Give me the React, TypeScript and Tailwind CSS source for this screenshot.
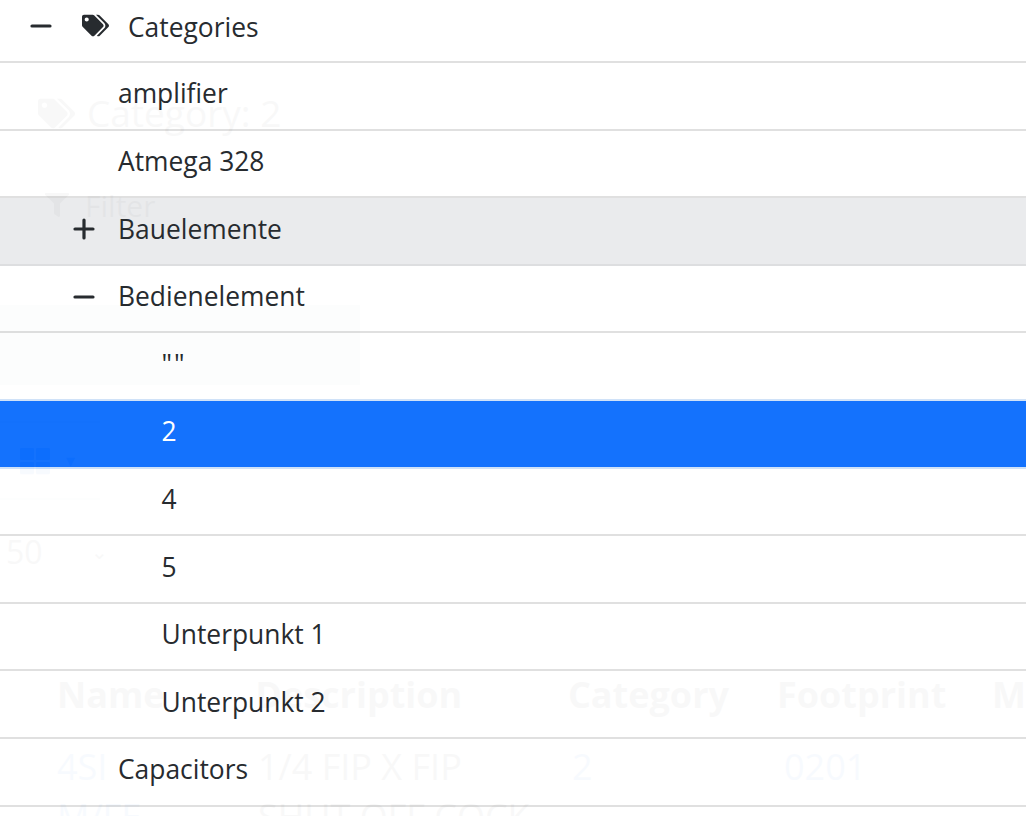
import { FaTags, FaFilter, FaThLarge } from "react-icons/fa";

function Minus() {
  return (
    <svg width="22" height="22" viewBox="0 0 22 22" fill="none" stroke="#212529" strokeWidth="3.2" strokeLinecap="round">
      <path d="M2 11H20" />
    </svg>
  );
}

function Plus() {
  return (
    <svg width="22" height="22" viewBox="0 0 22 22" fill="none" stroke="#212529" strokeWidth="3.2" strokeLinecap="round">
      <path d="M2 11H20M11 2V20" />
    </svg>
  );
}

type Row = {
  label: string;
  level: 1 | 2;
  mark?: "minus" | "plus";
  tone?: "hover" | "active";
};

const rows: Row[] = [
  { label: "amplifier", level: 1 },
  { label: "Atmega 328", level: 1 },
  { label: "Bauelemente", level: 1, mark: "plus", tone: "hover" },
  { label: "Bedienelement", level: 1, mark: "minus" },
  { label: '""', level: 2 },
  { label: "2", level: 2, tone: "active" },
  { label: "4", level: 2 },
  { label: "5", level: 2 },
  { label: "Unterpunkt 1", level: 2 },
  { label: "Unterpunkt 2", level: 2 },
  { label: "Capacitors", level: 1 },
];

export default function App() {
  return (
    <div className="relative h-[816px] w-[1026px] overflow-hidden bg-white font-['Open_Sans','Noto_Sans',sans-serif] text-[#212529]">
      {/* page underneath the menu */}
      <div className="flex flex-col">
        <div className="mt-[90px] ml-[38px] flex h-[46px] items-center gap-[12px] whitespace-nowrap text-[37px]">
          <FaTags size={37} />
          <span>Category: 2</span>
        </div>
        <div className="mt-[46px] ml-[45px] flex h-[46px] items-center gap-[16px] text-[30px]">
          <FaFilter size={24} />
          <span>Filter</span>
        </div>
        <div className="mt-[77px] h-[80px] w-[360px] bg-[#198754]/30" />
        <div className="mt-[36px] flex h-[79px] w-[100px] items-center gap-[16px] border-y-2 border-[#dee2e6] pl-[20px] text-[#0d6efd]">
          <FaThLarge size={30} />
          <span className="text-[18px]">▾</span>
        </div>
        <div className="mt-[30px] flex h-[44px] items-center gap-[48px] pl-[6px] text-[32px]">
          <span>50</span>
          <span className="text-[20px]">⌄</span>
        </div>
        <div className="mt-[87px] flex h-[68px] items-center whitespace-nowrap text-[36px] font-bold">
          <span className="ml-[57px] w-[201px]">Name</span>
          <span className="w-[317px]">Description</span>
          <span className="w-[212px]">Category</span>
          <span className="w-[218px]">Footprint</span>
          <span>M</span>
        </div>
        <div className="mt-[8px] flex h-[60px] items-center whitespace-nowrap text-[36px]">
          <span className="ml-[57px] w-[201px] text-[#0d6efd]">4SI</span>
          <span className="w-[314px]">1/4 FIP X FIP</span>
          <span className="w-[212px] text-[#0d6efd]">2</span>
          <span className="text-[#0d6efd]">0201</span>
        </div>
        <div className="flex h-[40px] items-center whitespace-nowrap text-[36px]">
          <span className="ml-[57px] w-[201px] text-[#0d6efd]">M/FE</span>
          <span>SHUT OFF COCK</span>
        </div>
      </div>

      {/* the open category tree, over the page */}
      <div className="absolute inset-x-0 top-[-6px] bg-white text-[26.4px] opacity-[0.97]">
        <div className="flex h-[69px] items-center border-b-2 border-[#dfdfdf] pl-[30px]">
          <span className="mb-[4px] flex w-[52px]"><Minus /></span>
          <FaTags size={27} className="mr-[19px] mb-[4px]" />
          <span>Categories</span>
        </div>
        {rows.map((r) => (
          <div
            key={r.label}
            className={
              "flex items-center pb-[3px] " +
              (r.tone === "active"
                ? "relative -mt-[2px] h-[69.6px] border-y-2 border-[#cfe2f8] bg-[#0d6efd] text-white"
                : r.tone === "hover"
                  ? "h-[67.6px] border-b-2 border-[#dcdddf] bg-[#eaebed]"
                  : "h-[67.6px] border-b-2 border-[#dfdfdf]")
            }
          >
            {r.mark && (
              <span className="ml-[73px] mr-[23px] flex">
                {r.mark === "plus" ? <Plus /> : <Minus />}
              </span>
            )}
            <span
              className={
                (r.mark ? "" : r.level === 1 ? "ml-[118px]" : "ml-[161.5px]") +
                (r.label === '""' ? " tracking-[2px]" : "")
              }
            >
              {r.label}
            </span>
          </div>
        ))}
        <div className="h-[67.6px]" />
      </div>
    </div>
  );
}
